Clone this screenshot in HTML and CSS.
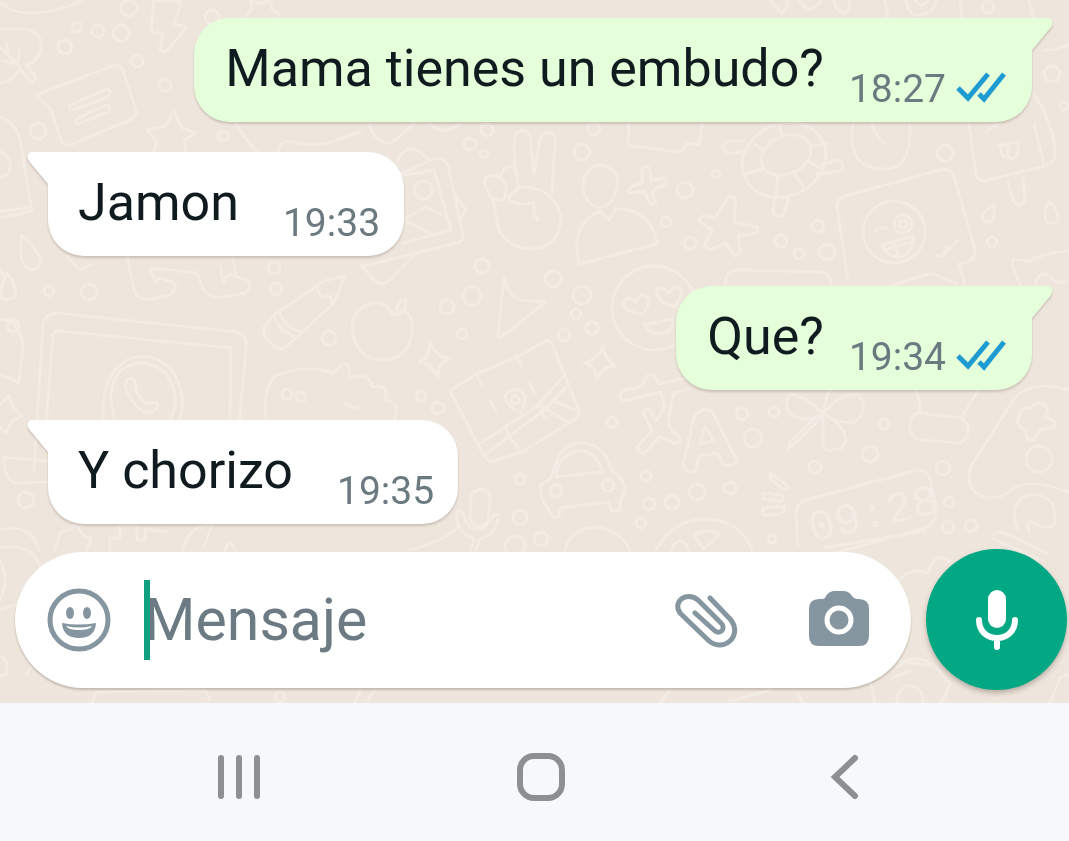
FILE: index.html
```html
<!DOCTYPE html>
<html lang="es">
<head>
<meta charset="utf-8">
<meta name="viewport" content="width=device-width, initial-scale=1">
<title>Chat</title>
<link rel="stylesheet" href="styles.css">
</head>
<body>
<svg class="symbols" aria-hidden="true">
  <symbol id="ticks" viewBox="0 0 50 32"><path d="M2 17 L12 27 L32 3 M23 23 L28 28 L48 3" fill="none" stroke="currentColor" stroke-width="5"/></symbol>
  <symbol id="tail" viewBox="0 0 42 36"><path d="M42 0H6C1 0-1 5 2 9L21 32L42 36Z" fill="currentColor"/></symbol>
</svg>
<main class="chat">
  <svg class="wallpaper" viewBox="0 0 1069 703" preserveAspectRatio="xMinYMin slice" aria-hidden="true">
    <!-- top left -->
    <path d="M0 2Q12 13 28 13Q62 12 82 0"/>
    <path d="M0 29H25Q42 32 41 48Q40 60 27 65L36 78L32 83L20 69Q10 84 0 82M0 47L20 67M6 42L8 54M20 49L17 64L3 61"/>
    <path d="M154 0L151 32L163 34L160 50L166 52L187 27L174 24L181 2Z"/>
    <path d="M246 16L252 9L250 0L260 4L270 0L272 9L280 16"/>
    <path d="M36 95L112 66Q120 63 123 71L136 110Q138 116 132 119L70 145Q64 147 61 140L50 108Z"/>
    <path d="M70 105L107 89Q113 91 108 97L73 110Q67 109 70 105ZM76 119L106 105Q113 106 108 112L78 124Q73 123 76 119Z"/>
    <path d="M154 152L157 142L147 130L166 126L174 111L181 127L196 133L184 140L186 152"/>
    <path d="M0 117Q17 124 20 140L32 211L0 218M0 211L28 208M0 151Q12 157 10 170Q8 176 0 177"/>
    <path d="M236 122Q245 140 258 152M278 152Q280 140 290 142Q322 148 336 140L360 132"/>
    <path d="M22 235Q36 248 41 260Q40 270 31 270Q17 265 22 235ZM67 256L80 270L92 264M0 270L5 277"/>
    <path d="M7 273Q18 288 15 296Q10 301 3 299Q-2 292 7 273Z"/>
    <!-- left middle -->
    <path d="M127 256L134 290Q138 302 152 299L170 295Q180 286 172 282L166 280Q158 275 156 283L150 270M152 268L197 273L203 288Q208 299 224 297L245 293Q255 284 245 279L236 277Q226 270 224 284L220 266M233 258L236 276"/>
    <path d="M34 470L43 325Q45 313 58 313L236 332Q248 335 246 348L239 425M44 450L53 335Q54 331 59 331L231 348L230 420"/>
    <path d="M4 457Q3 478 15 483L52 482M4 457L48 461"/>
    <path d="M104 426Q99 382 122 363Q148 347 171 369Q191 398 176 427M113 426L114 412Q105 390 121 370Q145 354 166 374Q183 398 169 421"/>
    <path d="M127 379Q123 388 130 397Q140 414 151 412Q161 408 156 402L146 404L136 392V384Q133 376 127 379Z"/>
    <path d="M0 319Q8 321 12 322Q26 336 22 357L19 382L0 375M8 321Q11 315 17 322"/>
    <path d="M0 405L9 395L13 408L22 416L11 422L6 433L0 427"/>
    <path d="M264 327L274 315L324 281L345 276L334 303L286 347Q280 351 274 346L264 336ZM274 316Q280 333 297 337M279 312Q285 328 302 332M317 287L321 297L330 296L333 304"/>
    <path d="M267 425Q261 387 277 375Q307 364 334 373Q350 352 350 378Q370 372 372 387Q390 383 385 400Q402 402 394 420M345 403Q355 411 360 405"/>
    <path d="M394 316Q385 300 372 303Q354 308 352 326Q353 345 365 355Q372 361 382 359Q398 362 408 346Q417 325 408 314Q402 309 394 316ZM396 314Q396 302 406 299Q407 310 399 315"/>
    <!-- photo, victory hand, contact -->
    <path d="M380 183L436 158Q444 157 448 165L463 236Q463 241 457 243L360 267M400 176L434 170L451 230L404 243M398 160Q405 144 418 151L430 160M403 220L425 207L445 216M408 222L433 235M455 195L466 210L460 220M362 266L375 281Q382 287 390 280L416 253"/>
    <path d="M516 175Q512 143 516 134Q524 126 530 136L534 174L540 140Q544 130 552 133Q558 138 554 155L552 192M516 189Q527 185 540 190Q560 200 561 220Q557 249 531 249Q508 248 499 230L493 200Q480 180 487 177Q499 171 506 185Q507 205 496 199M501 178Q502 165 514 166Q519 178 518 190Q503 198 512 202Q525 206 534 202L534 214L538 220"/>
    <path d="M600 165Q618 167 618 184Q614 205 600 208Q584 203 583 187Q584 167 600 165ZM600 211L609 220L616 209Q650 207 657 244L579 264Q573 239 583 224Q591 215 600 211Z"/>
    <path d="M642 168Q650 161 651 180L664 178Q672 183 656 188L652 192L656 203Q649 208 645 191L630 193Q624 188 642 183Z"/>
    <path d="M703 216L715 218L729 196L736 199L734 222L757 227L757 233L738 236L740 253L735 256L725 243L710 250L704 246L712 230L698 220Z"/>
    <path d="M629 123L628 142Q629 146 633 146L680 152L688 143L699 145L702 123M370 124Q373 142 390 143Q400 138 414 123M430 124Q442 137 460 124"/>
    <!-- life ring, smiley sticker, ice cream -->
    <ellipse cx="784" cy="160" rx="43" ry="36" transform="rotate(-25 784 160)"/><ellipse cx="786" cy="155" rx="26" ry="19" transform="rotate(-25 786 155)"/>
    <path d="M779 124L782 138M754 144L765 151M744 174L763 169M778 177L776 196M793 172L803 187M807 161L819 167M811 146L828 144M744 141Q719 139 724 150Q730 157 742 151M822 165L836 160Q847 164 841 171L817 174M775 197L773 213Q779 220 785 212L789 196"/>
    <path d="M853 124Q849 151 861 162Q877 174 898 166Q912 155 910 124M872 124Q876 138 885 143"/>
    <path d="M848 280L837 207Q836 199 845 196L940 170Q950 167 954 176L975 250Q976 257 970 261L959 264L965 286"/>
    <circle cx="894" cy="232" r="31"/><circle cx="903" cy="224" r="9"/><circle cx="903" cy="224" r="4"/>
    <path d="M874 232Q881 225 888 229M882 245L914 236Q911 256 898 257Q886 256 882 245ZM884 250L912 242M895 244L898 256M936 256L942 256L947 247M943 256L957 241"/>
    <path d="M969 124L976 174Q978 182 985 181L1045 166Q1055 163 1055 154Q1053 121 1034 95M1034 124L1044 165M986 132L997 124M998 146L1018 142V154Q1016 160 1008 158Q1001 158 1001 148M1008 146V157M1008 182L1013 201Q1019 208 1025 201L1023 177M1029 0L1034 20"/>
    <path d="M994 205Q995 224 989 222Q979 221 984 212ZM1049 201Q1060 213 1058 220Q1051 226 1046 221Q1043 212 1049 201Z"/>
    <path d="M1021 286Q1009 262 1014 259L1030 261Q1045 252 1069 251M1035 286Q1038 270 1050 276Q1054 285 1066 281M726 286Q723 271 738 270L822 272Q832 275 831 286M889 286L932 273L957 284"/>
    <!-- centre -->
    <path d="M504 278Q510 298 520 300L546 302L500 338Q497 339 498 334Z"/>
    <circle cx="654" cy="308" r="42"/><path d="M623 304Q626 294 636 302Q642 289 648 299Q650 306 642 315Q625 311 623 304ZM656 292Q660 283 669 293Q677 281 682 292Q681 298 674 307Q658 302 656 292ZM644 325L672 319Q674 332 659 334Q648 333 644 325Z"/>
    <path d="M430 342Q434 356 450 359Q438 362 438 377Q433 365 419 362Q430 358 430 342ZM603 346Q604 358 615 366Q602 366 597 379Q596 366 584 363Q598 360 603 346Z"/>
    <path d="M450 391L476 374L517 357L546 341Q550 340 553 346L579 411Q580 416 575 419L522 452L490 462L484 456ZM479 444L536 407L563 377M486 454L543 411L566 387M540 406L570 423M552 400L575 410"/>
    <path stroke-dasharray="12 18" d="M476 374L514 444M516 355L540 405M512 440L524 456M540 410L555 432"/>
    <path d="M521 413Q503 404 506 394Q515 385 524 394Q527 402 521 413Z"/><circle cx="515" cy="400" r="4"/>
    <path d="M551 478L559 455Q570 441 585 443Q603 445 612 470Q625 480 625 491L620 502V510L612 511L608 502L560 508L559 516Q554 520 550 513L547 507Q539 498 541 485ZM556 477Q559 452 580 451Q595 450 603 472Z"/><circle cx="556" cy="491" r="6"/><circle cx="608" cy="485" r="6"/>
    <path d="M476 491Q490 485 490 501L488 522Q476 532 470 519L471 499Q471 493 476 491ZM457 513Q455 531 474 539L470 550M498 520Q495 534 480 539L476 550M457 512Q463 508 466 522Q478 539 491 520Q495 511 499 516"/>
    <path d="M622 391L643 386Q645 372 654 375L659 384L700 375M622 391Q618 397 624 401L661 392L665 407L656 421L650 410Q642 408 644 414L652 431L637 447Q640 456 645 452L660 437L674 443Q683 442 679 437L669 427Q668 413 674 393L690 389"/>
    <path d="M683 466L694 417Q701 406 712 411L737 461Q732 468 723 464L717 453L699 456L696 470Q689 475 683 466ZM705 427L714 440L700 444Z"/>
    <path d="M565 550Q570 528 597 527Q620 530 630 550M656 550Q673 519 706 519Q740 520 752 550M671 550Q680 532 689 550M694 534Q710 528 719 535L703 549Z"/>
    <path d="M410 550Q440 543 458 527"/>
    <!-- right middle -->
    <path d="M823 414Q806 396 790 394Q781 408 795 417Q808 422 823 414Q826 395 830 391M823 414Q840 392 859 395Q870 410 855 422Q840 425 823 414Q844 425 846 440Q843 451 835 449Q824 454 823 443ZM822 417L788 450L790 442L818 415"/>
    <path d="M916 391Q921 402 920 412Q908 415 910 430Q912 438 921 440L960 443Q969 440 968 425L961 418L920 413M961 418L978 391"/>
    <path d="M1069 390Q1027 378 1012 402L970 468Q965 490 984 497Q998 501 1011 490Q1032 476 1069 493M1019 417Q1021 404 1031 409Q1035 400 1044 405Q1051 411 1044 417Q1058 420 1054 428L1041 429L1034 440Q1024 441 1026 430Q1013 424 1019 417"/><circle cx="1039" cy="459" r="13"/>
    <path d="M798 546L796 514Q796 504 806 500L917 470Q927 469 930 479L936 508Q937 523 925 528L810 560M824 548L925 531"/>
    <text class="clock" x="812" y="542" transform="rotate(-13 812 542)">09:28</text>
    <path d="M770 473L786 484Q791 492 782 488L770 479ZM763 493L782 495Q786 501 779 501L763 499ZM763 508L784 506Q786 513 779 514L763 515Z"/>
    <path d="M1018 530Q1007 501 1031 494Q1057 497 1054 515Q1058 531 1040 526Q1024 515 1029 533M993 534Q998 529 1010 535L1048 554M994 539L1038 559"/>
    <path d="M0 530Q31 522 39 550M55 550L60 532L70 530L76 524L83 536L91 538L87 550M110 550V538H120V525H137V540H145V529L166 532M182 550Q190 524 212 525L204 547M225 550Q229 536 235 550"/>
    <!-- around the composer -->
    <path d="M0 548Q38 540 43 580M0 610L17 604M0 560Q10 580 0 600M0 656Q10 660 6 674L0 676M26 675L35 660M92 703L96 692L205 690L210 700M354 703L360 691M368 700L374 691M660 703L670 690M730 701L770 690M798 694L803 703M875 703L870 680L891 660L935 666L950 684L941 703M892 678L910 671M898 667Q915 650 935 667M900 580Q912 567 928 573Q935 549 950 562M1069 675L1060 678L1050 703"/>
    <path d="M770 0L782 14Q790 5 786 0M798 0L808 10Q820 5 821 0M834 0Q836 15 848 12L850 0M885 0L888 18M906 0Q908 16 920 15Q934 14 936 0M915 0Q922 10 928 0M960 0L962 18M1045 50Q1053 51 1069 44"/>
    <circle cx="129" cy="8" r="8"/><circle cx="77" cy="27" r="5"/><circle cx="98" cy="31" r="6"/><circle cx="121" cy="33" r="8"/><circle cx="65" cy="47" r="7"/><circle cx="137" cy="61" r="6"/><circle cx="165" cy="85" r="6"/><circle cx="38" cy="131" r="8"/><circle cx="223" cy="136" r="5"/><circle cx="212" cy="17" r="7"/>
    <circle cx="470" cy="144" r="6"/><circle cx="484" cy="154" r="4"/><circle cx="487" cy="130" r="6"/><circle cx="582" cy="152" r="8"/><circle cx="594" cy="129" r="6"/><circle cx="423" cy="190" r="9"/><circle cx="685" cy="190" r="8"/><circle cx="666" cy="222" r="5"/><circle cx="690" cy="243" r="6"/><circle cx="716" cy="174" r="4"/>
    <circle cx="482" cy="266" r="7"/><circle cx="553" cy="279" r="8"/><circle cx="472" cy="296" r="9"/><circle cx="447" cy="307" r="7"/><circle cx="582" cy="295" r="9"/><circle cx="576" cy="314" r="5"/><circle cx="592" cy="328" r="6"/><circle cx="564" cy="335" r="6"/><circle cx="462" cy="334" r="5"/>
    <circle cx="945" cy="153" r="8"/><circle cx="1052" cy="74" r="8"/><circle cx="1064" cy="106" r="4"/><circle cx="988" cy="7" r="6"/><circle cx="818" cy="226" r="6"/><circle cx="781" cy="241" r="6"/><circle cx="827" cy="252" r="8"/><circle cx="799" cy="254" r="5"/><circle cx="992" cy="242" r="5"/>
    <circle cx="49" cy="291" r="5"/><circle cx="89" cy="292" r="8"/><circle cx="274" cy="268" r="6"/><circle cx="276" cy="289" r="6"/><circle cx="329" cy="338" r="7"/><circle cx="287" cy="394" r="5"/><circle cx="301" cy="397" r="5"/><circle cx="26" cy="500" r="8"/><circle cx="13" cy="326" r="6"/>
    <circle cx="421" cy="396" r="5"/><circle cx="438" cy="408" r="6"/><circle cx="520" cy="479" r="5"/><circle cx="612" cy="422" r="5"/><circle cx="646" cy="476" r="5"/><circle cx="649" cy="504" r="6"/><circle cx="672" cy="502" r="7"/><circle cx="697" cy="492" r="8"/><circle cx="641" cy="523" r="5"/><circle cx="520" cy="517" r="7"/><circle cx="541" cy="539" r="7"/><circle cx="515" cy="546" r="10"/>
    <circle cx="742" cy="414" r="6"/><circle cx="753" cy="438" r="9"/><circle cx="774" cy="412" r="5"/><circle cx="730" cy="488" r="6"/><circle cx="815" cy="467" r="6"/><circle cx="870" cy="454" r="8"/><circle cx="884" cy="424" r="5"/><circle cx="943" cy="468" r="7"/><circle cx="949" cy="502" r="5"/><circle cx="948" cy="527" r="6"/><circle cx="971" cy="526" r="6"/><circle cx="772" cy="539" r="4"/><circle cx="910" cy="699" r="13"/><circle cx="280" cy="697" r="5"/>
  </svg>

  <section class="messages" aria-label="Mensajes">
    <article class="bubble sent"><svg class="tail"><use href="#tail"/></svg><p class="text">Mama tienes un embudo?</p><time class="time">18:27</time><svg class="ticks" role="img" aria-label="Leído"><use href="#ticks"/></svg></article>
    <article class="bubble received"><svg class="tail"><use href="#tail"/></svg><p class="text">Jamon</p><time class="time">19:33</time></article>
    <article class="bubble sent"><svg class="tail"><use href="#tail"/></svg><p class="text">Que?</p><time class="time">19:34</time><svg class="ticks" role="img" aria-label="Leído"><use href="#ticks"/></svg></article>
    <article class="bubble received"><svg class="tail"><use href="#tail"/></svg><p class="text">Y chorizo</p><time class="time">19:35</time></article>
  </section>

  <form class="composer">
    <div class="field">
      <button class="icon-button" type="button" aria-label="Emojis">
        <svg width="64" height="64" viewBox="0 0 64 64"><circle cx="32" cy="32" r="29" fill="none" stroke="currentColor" stroke-width="5"/><ellipse cx="23" cy="25" rx="4" ry="6" fill="currentColor"/><ellipse cx="40" cy="25" rx="4" ry="6" fill="currentColor"/><path d="M15 35Q32 38 49 35Q48 50 32 50Q16 50 15 35Z" fill="currentColor"/><path d="M19 38Q32 41 45 38Q43 42 32 42Q21 42 19 38Z" fill="#fff"/></svg>
      </button>
      <div class="entry"><input class="message-input" type="text" placeholder="Mensaje" aria-label="Mensaje"><span class="caret"></span></div>
      <button class="icon-button" type="button" aria-label="Adjuntar">
        <svg width="64" height="58" viewBox="0 0 64 58"><path d="M20 22L40 40C46 44 51 37 46 32L23 9C11-1-4 12 6 23L33 49C48 63 68 45 56 29L35 7" fill="none" stroke="currentColor" stroke-width="5" stroke-linecap="round" stroke-linejoin="round"/></svg>
      </button>
      <button class="icon-button" type="button" aria-label="Cámara">
        <svg width="60" height="58" viewBox="0 0 60 58"><path d="M10 8H13Q16 8 17 5Q20 0 26 0H34Q40 0 43 5Q45 8 48 8H50Q60 8 60 18V45Q60 55 50 55H10Q0 55 0 45V18Q0 8 10 8Z" fill="currentColor"/><circle cx="30" cy="29" r="12" fill="none" stroke="#fff" stroke-width="5"/></svg>
      </button>
    </div>
    <button class="mic-button" type="button" aria-label="Grabar mensaje de voz">
      <svg width="44" height="60" viewBox="0 0 44 60"><rect x="13" y="0" width="18" height="38" rx="9" fill="currentColor"/><path d="M4 30C4 54 40 54 40 30M22 48V57" fill="none" stroke="currentColor" stroke-width="6" stroke-linecap="round"/></svg>
    </button>
  </form>
</main>
<nav class="system-nav" aria-label="Navegación">
  <button class="nav-button" type="button" aria-label="Recientes"><svg width="60" height="60" viewBox="0 0 60 60"><path d="M12 11V49M30 11V49M48 11V49"/></svg></button>
  <button class="nav-button" type="button" aria-label="Inicio"><svg width="60" height="60" viewBox="0 0 60 60"><rect x="9" y="9" width="42" height="42" rx="14"/></svg></button>
  <button class="nav-button" type="button" aria-label="Atrás"><svg width="60" height="60" viewBox="0 0 60 60"><path d="M42 11L22 30L42 49"/></svg></button>
</nav>
</body>
</html>
```
FILE: styles.css
```css
* { box-sizing: border-box; }

body {
  margin: 0;
  min-height: 100vh;
  display: flex;
  flex-direction: column;
  font-family: Roboto, "Noto Sans", sans-serif;
  background: #f7f8fa;
}

button {
  padding: 0;
  border: 0;
  background: none;
  color: inherit;
  display: flex;
  align-items: center;
  justify-content: center;
}

.symbols { position: absolute; width: 0; height: 0; }

.chat {
  position: relative;
  flex: 1;
  display: flex;
  flex-direction: column;
  justify-content: space-between;
  background: #eee5dc;
  overflow: hidden;
}

.wallpaper {
  position: absolute;
  inset: 0;
  width: 100%;
  height: 100%;
  fill: none;
  stroke: #f3ece5;
  stroke-width: 3;
  stroke-linejoin: round;
  stroke-linecap: round;
}

.clock {
  font: 44px "Liberation Mono", monospace;
  fill: #f3ece5;
  stroke: none;
}

.messages {
  position: relative;
  display: flex;
  flex-direction: column;
  gap: 30px;
  padding: 18px 37px 24px 48px;
}

.bubble {
  position: relative;
  display: flex;
  align-items: flex-end;
  min-height: 104px;
  border-radius: 36px;
  filter: drop-shadow(0 2px 1px rgb(80 65 50 / 22%));
}

.sent {
  align-self: flex-end;
  gap: 25px;
  padding: 0 26px 10px 31px;
  color: #e5ffdb;
  background: #e5ffdb;
  border-top-right-radius: 0;
}

.received {
  align-self: flex-start;
  gap: 44px;
  padding: 0 24px 10px 30px;
  color: #fff;
  background: #fff;
  border-top-left-radius: 0;
}

.tail { position: absolute; top: 0; width: 42px; height: 36px; }
.received .tail { left: -21px; }
.sent .tail { right: -21px; transform: scaleX(-1); }

.text {
  position: relative;
  margin: 0;
  padding-bottom: 12px;
  font-size: 52px;
  line-height: 62px;
  color: #101b20;
}

.time {
  position: relative;
  font-size: 39px;
  line-height: 46px;
  color: #6b7a80;
}

.ticks {
  width: 50px;
  height: 32px;
  margin: 0 0 9px -15px;
  color: #1e9bd0;
}

.composer {
  position: relative;
  display: flex;
  align-items: center;
  gap: 15px;
  padding: 0 2px 13px 15px;
}

.field {
  flex: 1;
  min-width: 0;
  height: 136px;
  display: flex;
  align-items: center;
  padding: 0 42px 0 32px;
  border-radius: 68px;
  background: #fff;
  box-shadow: 0 2px 2px rgb(80 65 50 / 25%);
}

.icon-button { flex: none; color: #8696a0; }
.entry + .icon-button + .icon-button { margin-left: 70px; }

.entry { position: relative; flex: 1; min-width: 0; margin-left: 33px; }

.message-input {
  display: block;
  width: 100%;
  padding: 0;
  border: 0;
  outline: 0;
  background: none;
  font: 59px/80px Roboto, "Noto Sans", sans-serif;
  color: #101b20;
}

.message-input::placeholder { color: #6b7a83; opacity: 1; }

.caret { position: absolute; top: 0; left: 0; width: 6px; height: 80px; background: #11a17f; }

.mic-button {
  flex: none;
  width: 141px;
  height: 141px;
  border-radius: 50%;
  background: #02a884;
  color: #fff;
  box-shadow: 0 3px 5px rgb(60 50 40 / 30%);
}

.system-nav {
  display: flex;
  justify-content: center;
  gap: 242px;
  padding: 44px 0 34px 13px;
  background: #f7f8fa;
}

.nav-button svg { fill: none; stroke: #8e8f91; stroke-width: 6; stroke-linecap: round; }
```
